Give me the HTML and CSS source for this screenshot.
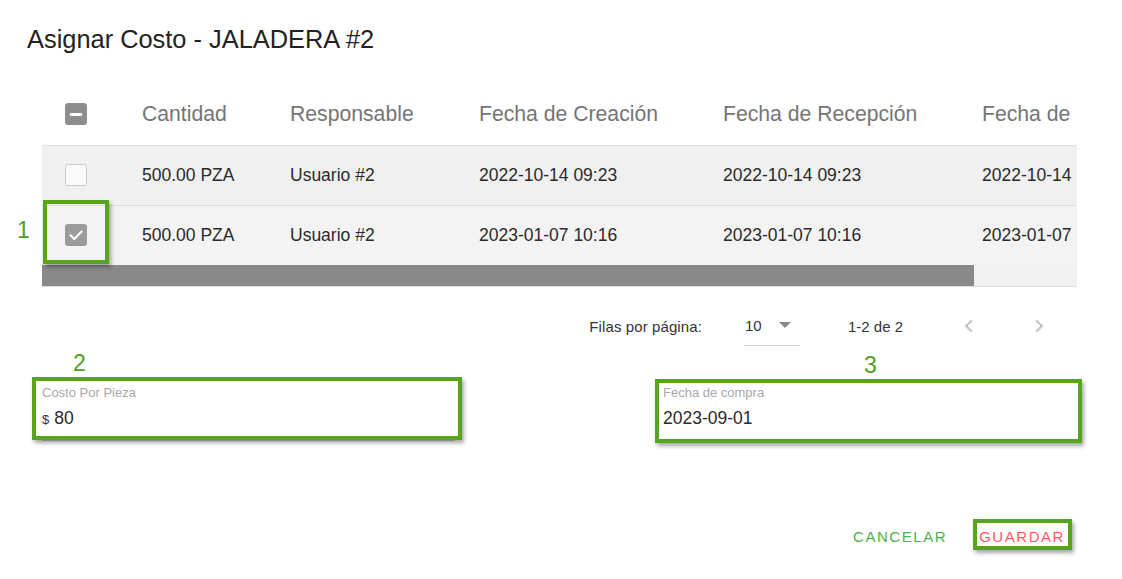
FILE: index.html
```html
<!DOCTYPE html>
<html lang="es">
<head>
<meta charset="utf-8">
<title>Asignar Costo</title>
<link rel="stylesheet" href="styles.css">
</head>
<body>
<div class="dialog">
  <h2 class="title">Asignar Costo - JALADERA #2</h2>

  <div class="table-wrap">
    <div class="table-clip">
      <table class="grid">
        <colgroup>
          <col class="c-check"><col class="c-qty"><col class="c-resp"><col class="c-created"><col class="c-received"><col class="c-other">
        </colgroup>
        <thead>
          <tr>
            <th><span class="cb cb-indeterminate"><span class="dash"></span></span></th>
            <th>Cantidad</th>
            <th>Responsable</th>
            <th>Fecha de Creación</th>
            <th>Fecha de Recepción</th>
            <th>Fecha de</th>
          </tr>
        </thead>
        <tbody>
          <tr class="row-a">
            <td><span class="cb cb-empty"></span></td>
            <td>500.00 PZA</td>
            <td>Usuario #2</td>
            <td>2022-10-14 09:23</td>
            <td>2022-10-14 09:23</td>
            <td>2022-10-14</td>
          </tr>
          <tr class="row-b">
            <td><span class="cb cb-checked"><svg viewBox="0 0 22 22" width="22" height="22"><path d="M5.5 11.2 L9.3 15 L16.6 7.6" fill="none" stroke="#fff" stroke-width="2.2" stroke-linecap="round" stroke-linejoin="round"/></svg></span></td>
            <td>500.00 PZA</td>
            <td>Usuario #2</td>
            <td>2023-01-07 10:16</td>
            <td>2023-01-07 10:16</td>
            <td>2023-01-07</td>
          </tr>
        </tbody>
      </table>
    </div>
    <div class="scrollbar"><div class="thumb"></div></div>
  </div>

  <div class="pagination">
    <span class="pg-label">Filas por página:</span>
    <div class="pg-select"><span>10</span><span class="caret"></span></div>
    <span class="pg-count">1-2 de 2</span>
    <span class="pg-btn pg-prev"><svg viewBox="0 0 24 24" width="26" height="26"><path d="M15.41 7.41L14 6l-6 6 6 6 1.41-1.41L10.83 12z" fill="#c4c4c4"/></svg></span>
    <span class="pg-btn pg-next"><svg viewBox="0 0 24 24" width="26" height="26"><path d="M10 6L8.59 7.41 13.17 12l-4.58 4.59L10 18l6-6z" fill="#c4c4c4"/></svg></span>
  </div>

  <div class="fields">
    <div class="field field-cost">
      <label class="field-label">Costo Por Pieza</label>
      <div class="field-input"><span class="adorn">$</span>80</div>
    </div>
    <div class="field field-date">
      <label class="field-label">Fecha de compra</label>
      <div class="field-input">2023-09-01</div>
    </div>
  </div>

  <div class="actions">
    <button class="btn btn-cancel">Cancelar</button>
    <button class="btn btn-save">Guardar</button>
  </div>

  <span class="mark-num num-1">1</span>
  <span class="mark-num num-2">2</span>
  <span class="mark-num num-3">3</span>
  <div class="mark-box box-1"></div>
  <div class="mark-box box-2"></div>
  <div class="mark-box box-3"></div>
  <div class="mark-box box-4"></div>
</div>
</body>
</html>
```

FILE: styles.css
```css
* { box-sizing: border-box; }

html, body {
  margin: 0;
  padding: 0;
  background: #ffffff;
}

body {
  font-family: "Liberation Sans", Arial, sans-serif;
  color: #222;
}

.dialog {
  position: relative;
  width: 1122px;
  height: 579px;
  overflow: hidden;
}

.title {
  margin: 0;
  padding: 24px 0 0 27px;
  font-size: 25.4px;
  line-height: 30px;
  font-weight: normal;
  color: #222;
}

.table-wrap {
  margin: 30px 0 0 42px;
  width: 1035px;
}

.table-clip {
  overflow: hidden;
  width: 1035px;
}

.grid {
  table-layout: fixed;
  width: 1035px;
  border-collapse: collapse;
}

.c-check { width: 100px; }
.c-qty { width: 148px; }
.c-resp { width: 189px; }
.c-created { width: 244px; }
.c-received { width: 259px; }
.c-other { width: 95px; }

.grid th {
  height: 61px;
  padding: 0;
  text-align: left;
  font-weight: normal;
  font-size: 21.2px;
  color: #757575;
  border-bottom: 1px solid #e0e0e0;
  white-space: nowrap;
}

.grid td {
  height: 60px;
  padding: 0;
  font-size: 17.5px;
  color: #2a2a2a;
  white-space: nowrap;
}

.row-a td {
  background: #f0f0f0;
  border-bottom: 1px solid #dcdcdc;
}

.row-b td {
  background: #f3f3f3;
}

.cb {
  display: flex;
  align-items: center;
  justify-content: center;
  width: 22px;
  height: 22px;
  margin-left: 23px;
  border-radius: 3px;
}

.cb-indeterminate {
  background: #8d8d8d;
}

.cb-indeterminate .dash {
  width: 12px;
  height: 3px;
  background: #fff;
}

.cb-empty {
  background: #fafafa;
  border: 1.5px solid #cccccc;
}

.cb-checked {
  background: #9b9b9b;
}

.scrollbar {
  height: 22px;
  background: #f1f1f1;
  border-bottom: 1px solid #dedede;
}

.thumb {
  width: 932px;
  height: 21px;
  background: #898989;
}

.pagination {
  display: flex;
  align-items: center;
  justify-content: flex-end;
  height: 52px;
  margin-top: 13px;
  padding-right: 70px;
  font-size: 15px;
  color: #333;
}

.pg-label {
  letter-spacing: 0.1px;
}

.pg-select {
  position: relative;
  display: flex;
  align-items: center;
  width: 56px;
  height: 40px;
  margin-left: 42px;
  padding-left: 1px;
  border-bottom: 1px solid #cfcfcf;
}

.caret {
  position: absolute;
  left: 35px;
  top: 16px;
  width: 0;
  height: 0;
  border-left: 6px solid transparent;
  border-right: 6px solid transparent;
  border-top: 6px solid #888;
}

.pg-count {
  margin-left: 48px;
}

.pg-btn {
  display: flex;
}

.pg-prev { margin-left: 53px; }
.pg-next { margin-left: 44px; }

.fields {
  display: flex;
  justify-content: space-between;
  margin-top: 33px;
  padding: 0 45px 0 42px;
}

.field {
  display: flex;
  flex-direction: column;
  border-bottom: 1px solid #cacaca;
  padding-bottom: 8px;
}

.field-cost { width: 413px; }
.field-date { width: 417px; padding-left: 3px; }

.field-label {
  font-size: 13px;
  line-height: 16px;
  color: #a8a8a8;
}

.field-input {
  margin-top: 5px;
  font-size: 17.5px;
  line-height: 24px;
  color: #2a2a2a;
}

.adorn {
  font-size: 13px;
  margin-right: 5px;
  color: #333;
}

.actions {
  display: flex;
  justify-content: flex-end;
  gap: 16px;
  margin-top: 78px;
  padding-right: 49px;
}

.btn {
  height: 36px;
  padding: 0 8px;
  border: none;
  background: transparent;
  font-family: "Liberation Sans", Arial, sans-serif;
  font-size: 15px;
  letter-spacing: 1.55px;
  text-transform: uppercase;
  line-height: 36px;
}

.btn-cancel { color: #4caf50; }
.btn-save { color: #ff5a5f; }

.mark-num {
  position: absolute;
  font-size: 23px;
  line-height: 22px;
  color: #4f9f1c;
}

.num-1 { left: 17px; top: 219px; }
.num-2 { left: 73px; top: 352px; }
.num-3 { left: 864px; top: 354px; }

.mark-box {
  position: absolute;
  border: 4px solid #57a51d;
  box-shadow: 2px 3px 4px rgba(0, 0, 0, 0.35);
}

.box-1 { left: 43px; top: 200px; width: 66px; height: 64px; }
.box-2 { left: 32px; top: 377px; width: 430px; height: 63px; }
.box-3 { left: 655px; top: 379px; width: 427px; height: 64px; }
.box-4 { left: 973px; top: 519px; width: 99px; height: 31px; }
```
